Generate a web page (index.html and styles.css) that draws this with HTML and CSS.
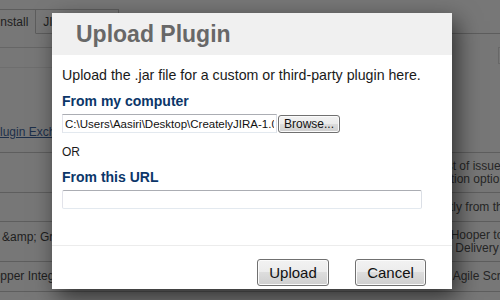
FILE: index.html
```html
<!DOCTYPE html>
<html>
<head>
<meta charset="utf-8">
<link rel="stylesheet" href="styles.css">
</head>
<body>
<div class="page">
  <div class="tabs">
    <div class="tab tab-active">Install</div>
    <div class="tab">JIRA Plugins</div>
    <div class="tab-fill"></div>
  </div>
  <div class="sub">
    <div class="sub-left">
      <div class="sub-line1"></div>
      <div class="sub-line2"></div>
    </div>
    <div class="search"></div>
  </div>
  <div class="intro-area">
    <a class="ex-link" href="#">Plugin Exchange</a>
  </div>
  <div class="row row1">
    <div class="cell-left"></div>
    <div class="cell-right"><div>ist of issues</div><div>ation options</div></div>
  </div>
  <div class="row row2">
    <div class="cell-left"></div>
    <div class="cell-right"><div>ctly from the</div></div>
  </div>
  <div class="row row3">
    <div class="cell-left cell-top">&amp;amp; GreenHopper</div>
    <div class="cell-right"><div>nHooper to</div><div>&amp; Delivery</div></div>
  </div>
  <div class="row row4">
    <div class="cell-left cell-indent">Hopper Integration</div>
    <div class="cell-right"><div>s Agile Scrum</div></div>
  </div>
  <div class="row row5"></div>
</div>

<div class="dialog">
  <div class="dlg-head">Upload Plugin</div>
  <div class="dlg-body">
    <p class="intro">Upload the .jar file for a custom or third-party plugin here.</p>
    <div class="label">From my computer</div>
    <div class="file-row">
      <input class="file-input" type="text" value="C:\Users\Aasiri\Desktop\CreatelyJIRA-1.0.0.jar">
      <button class="btn btn-browse" type="button">Browse...</button>
    </div>
    <div class="or">OR</div>
    <div class="label label2">From this URL</div>
    <input class="url-input" type="text" value="">
  </div>
  <div class="dlg-foot">
    <button class="btn btn-big btn-upload" type="button">Upload</button>
    <button class="btn btn-big btn-cancel" type="button">Cancel</button>
  </div>
</div>
</body>
</html>
```
FILE: styles.css
```css
html, body {
  margin: 0;
  padding: 0;
}
body {
  width: 500px;
  height: 300px;
  overflow: hidden;
  background: #777777;
  font-family: "Liberation Sans", Arial, sans-serif;
  position: relative;
}
.page {
  font-size: 12px;
  color: #1e1e1e;
}
.tabs {
  display: flex;
  height: 34px;
  padding-top: 9px;
  box-sizing: border-box;
}
.tab {
  border-top: 1px solid #5d5d5d;
  border-right: 1px solid #5d5d5d;
  border-bottom: 1px solid #5d5d5d;
  padding: 2px 7px 0 7px;
  line-height: 21px;
  white-space: nowrap;
}
.tab-active {
  margin-left: -11px;
  padding-left: 8px;
  border-bottom-color: transparent;
}
.tab-fill {
  flex: 1;
  border-bottom: 1px solid #5d5d5d;
}
.sub {
  display: flex;
  height: 34px;
}
.sub-left {
  width: 300px;
}
.sub-line1 {
  height: 13px;
  border-bottom: 1px solid #666;
}
.sub-line2 {
  height: 19px;
  border-bottom: 1px solid #6e6e6e;
}
.search {
  margin-left: auto;
  margin-top: 13px;
  width: 1px;
  height: 15px;
  border: 1px solid #686868;
  border-right: none;
}
.intro-area {
  height: 84px;
  box-sizing: border-box;
  padding-top: 58px;
  line-height: 13px;
}
.ex-link {
  display: inline-block;
  text-indent: -8px;
  color: #1d2f4a;
  text-decoration: underline;
}
.row {
  display: flex;
  box-sizing: border-box;
  border-top: 1px solid #5e5e5e;
  line-height: 13px;
}
.row1 { height: 40px; }
.row2 { height: 29px; }
.row3 { height: 40px; }
.row4 { height: 30px; }
.row5 { height: 20px; }
.cell-left {
  width: 444px;
  white-space: nowrap;
  overflow: hidden;
  align-self: center;
}
.cell-top {
  align-self: flex-start;
  padding-top: 9px;
  padding-left: 2px;
  box-sizing: border-box;
}
.cell-indent {
  text-indent: -15px;
}
.cell-right {
  flex: 1;
  white-space: nowrap;
  overflow: hidden;
  align-self: center;
  color: #262626;
}

/* dialog */
.dialog {
  position: absolute;
  left: 52px;
  top: 13px;
  width: 400px;
  height: 276px;
  background: #ffffff;
  display: flex;
  flex-direction: column;
  box-shadow: 5px 8px 22px rgba(0, 0, 0, 0.6);
}
.dlg-head {
  height: 42px;
  flex: none;
  background: #f0f0f0;
  padding-left: 24px;
  font-size: 23px;
  font-weight: bold;
  line-height: 42px;
  color: #686868;
}
.dlg-body {
  flex: 1;
  padding: 11px 10px 0 10px;
  border-bottom: 1px solid #ececec;
}
.intro {
  margin: 0;
  font-size: 14.2px;
  line-height: 18px;
  color: #1a1a1a;
}
.label {
  margin: 8px 0 4px 0;
  font-size: 14px;
  line-height: 18px;
  font-weight: bold;
  color: #0b3669;
}
.file-row {
  display: flex;
  align-items: center;
  gap: 1px;
  height: 19px;
}
.file-input {
  display: block;
  margin: 0;
  width: 215px;
  height: 19px;
  box-sizing: border-box;
  border: 1px solid;
  border-color: #abadb3 #dbdfe6 #e3e9ef #e2e3ea;
  border-radius: 0;
  padding: 0 2px;
  font-family: "Liberation Sans", Arial, sans-serif;
  font-size: 11.5px;
  line-height: 17px;
  color: #111;
  background: #fff;
  outline: none;
}
.btn {
  display: block;
  margin: 0;
  padding: 0;
  box-sizing: border-box;
  border: 1px solid #707070;
  border-radius: 3px;
  background: linear-gradient(#f2f2f2 0%, #ebebeb 50%, #dddddd 50%, #cfcfcf 100%);
  box-shadow: inset 0 0 0 1px #fbfbfb;
  color: #111;
  text-align: center;
  font-family: "Liberation Sans", Arial, sans-serif;
}
.btn-browse {
  width: 62px;
  height: 18px;
  font-size: 12px;
  line-height: 16px;
}
.or {
  margin-top: 12px;
  font-size: 12px;
  line-height: 15px;
  color: #1a1a1a;
}
.url-input {
  display: block;
  margin: 0;
  padding: 0;
  width: 360px;
  height: 19px;
  box-sizing: border-box;
  border: 1px solid;
  border-color: #abadb3 #dbdfe6 #e3e9ef #e2e3ea;
  border-radius: 2px;
  background: #fff;
  outline: none;
}
.dlg-foot {
  height: 43px;
  flex: none;
  display: flex;
  justify-content: flex-end;
  align-items: flex-start;
  gap: 26px;
  padding: 13px 26px 0 0;
  box-sizing: border-box;
}
.btn-big {
  height: 27px;
  font-size: 15px;
  line-height: 25px;
}
.btn-upload { width: 72px; }
.btn-cancel { width: 71px; }
```
